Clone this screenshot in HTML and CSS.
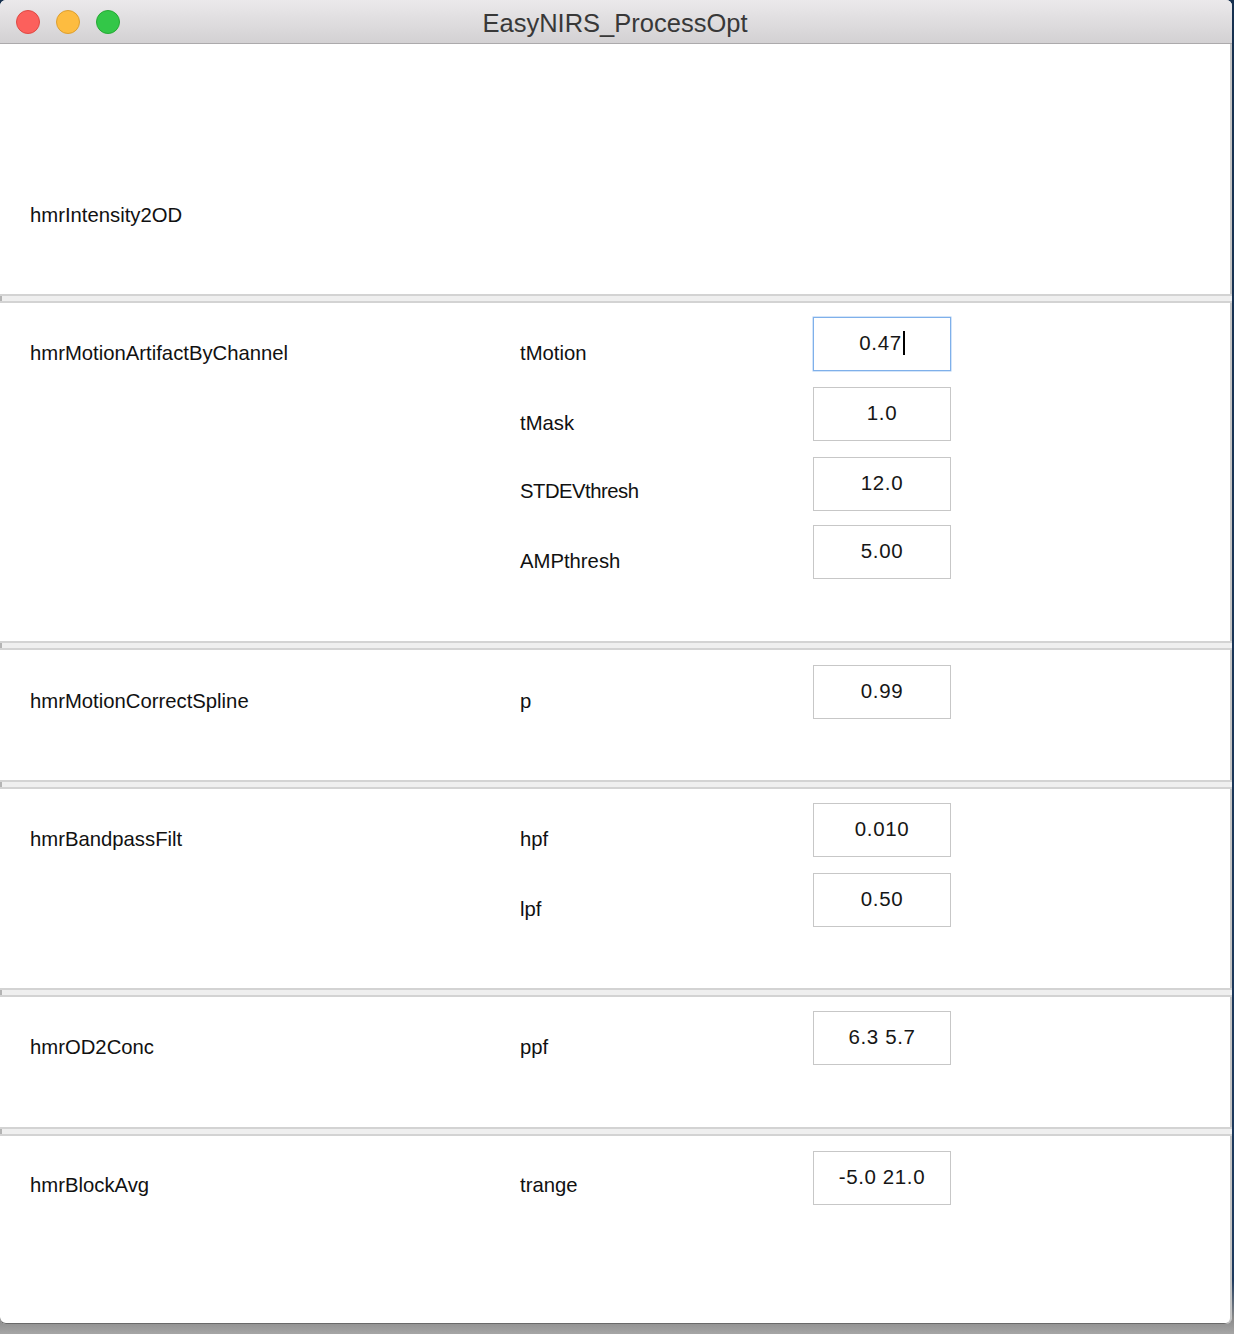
FILE: index.html
```html
<!DOCTYPE html>
<html>
<head>
<meta charset="utf-8">
<title>EasyNIRS_ProcessOpt</title>
<link rel="stylesheet" href="styles.css">
</head>
<body>
<div class="window">
  <div class="titlebar">
    <div class="lights">
      <span class="light red"></span>
      <span class="light yellow"></span>
      <span class="light green"></span>
    </div>
    <div class="title">EasyNIRS_ProcessOpt</div>
  </div>

  <div class="section s1">
    <div class="module first">hmrIntensity2OD</div>
  </div>
  <div class="sep"></div>

  <div class="section s2">
    <div class="module">hmrMotionArtifactByChannel</div>
    <div class="params">
      <div class="row"><div class="pname">tMotion</div><div class="box focus">0.47<span class="caret"></span></div></div>
      <div class="row"><div class="pname">tMask</div><div class="box">1.0</div></div>
      <div class="row"><div class="pname narrow">STDEVthresh</div><div class="box">12.0</div></div>
      <div class="row tight"><div class="pname">AMPthresh</div><div class="box">5.00</div></div>
    </div>
  </div>
  <div class="sep"></div>

  <div class="section s3">
    <div class="module">hmrMotionCorrectSpline</div>
    <div class="params">
      <div class="row"><div class="pname">p</div><div class="box">0.99</div></div>
    </div>
  </div>
  <div class="sep"></div>

  <div class="section s4">
    <div class="module">hmrBandpassFilt</div>
    <div class="params">
      <div class="row"><div class="pname">hpf</div><div class="box">0.010</div></div>
      <div class="row"><div class="pname">lpf</div><div class="box">0.50</div></div>
    </div>
  </div>
  <div class="sep"></div>

  <div class="section s5">
    <div class="module">hmrOD2Conc</div>
    <div class="params">
      <div class="row"><div class="pname">ppf</div><div class="box">6.3 5.7</div></div>
    </div>
  </div>
  <div class="sep"></div>

  <div class="section s6">
    <div class="module">hmrBlockAvg</div>
    <div class="params">
      <div class="row"><div class="pname">trange</div><div class="box">-5.0 21.0</div></div>
    </div>
  </div>
</div>
</body>
</html>
```
FILE: styles.css
```css
html, body {
  margin: 0;
  padding: 0;
}
body {
  width: 1234px;
  height: 1334px;
  overflow: hidden;
  background: linear-gradient(to bottom, #16304f 0, #1d3a5e 1280px, #8a8a8a 1318px, #a6a6a6 1334px);
  font-family: "Liberation Sans", Arial, Helvetica, sans-serif;
  color: #111;
}
.window {
  width: 1232px;
  height: 1324px;
  background: #fff;
  border-radius: 6px;
  overflow: hidden;
  display: flex;
  flex-direction: column;
  box-shadow: inset -2px 0 0 #c4c4c4, inset 0 -1px 0 #6a6a6a;
}
.titlebar {
  height: 43px;
  border-bottom: 1px solid #acaaac;
  background: linear-gradient(to bottom, #ebe9eb, #d3d1d3);
  position: relative;
  display: flex;
  align-items: center;
  justify-content: center;
  flex-shrink: 0;
}
.lights {
  position: absolute;
  left: 16px;
  top: 10px;
  display: flex;
  gap: 16px;
}
.light {
  width: 24px;
  height: 24px;
  border-radius: 50%;
  box-sizing: border-box;
  border: 1px solid;
}
.red { background: #fc605c; border-color: #df4943; }
.yellow { background: #fdbc40; border-color: #dd9f2f; }
.green { background: #33c748; border-color: #26a934; }
.title {
  font-size: 25.5px;
  color: #383838;
  margin-top: 3px;
  margin-left: -2px;
}
.section {
  display: flex;
  flex-shrink: 0;
  box-sizing: border-box;
  padding-top: 14px;
  font-size: 20.3px;
}
.s1 { height: 250px; padding-top: 0; }
.s2 { height: 338px; }
.s3 { height: 130px; padding-top: 15px; }
.s4 { height: 199px; }
.s5 { height: 130px; }
.s6 { height: 188px; padding-top: 15px; }
.s6 .module, .s6 .pname { padding-top: 22px; }
.module {
  padding-left: 30px;
  padding-top: 24px;
  line-height: 24px;
  box-sizing: border-box;
  width: 520px;
}
.module.first { padding-top: 159px; }
.params {
  display: flex;
  flex-direction: column;
  gap: 16px;
}
.row {
  display: flex;
  height: 54px;
}
.row.tight { margin-top: -2px; }
.pname {
  width: 293px;
  padding-top: 24px;
  line-height: 24px;
}
.pname.narrow { letter-spacing: -0.5px; padding-top: 22px; }
.box {
  width: 138px;
  height: 54px;
  box-sizing: border-box;
  border: 1px solid #c7c7c7;
  display: flex;
  align-items: center;
  justify-content: center;
  font-size: 20.5px;
  letter-spacing: 0.6px;
  color: #161616;
  padding-bottom: 2px;
}
.box.focus {
  border-color: #7fb0ea;
  box-shadow: 0 0 0 0.5px #a9cbf3;
}
.caret {
  display: inline-block;
  width: 2px;
  height: 24px;
  background: #000;
  margin-left: 1px;
}
.sep {
  height: 9px;
  flex-shrink: 0;
  box-sizing: border-box;
  border-top: 2px solid #d3d3d3;
  border-bottom: 2px solid #d3d3d3;
  background: #efefef;
  box-shadow: inset 2px 0 0 #b4b4b4;
}
```
